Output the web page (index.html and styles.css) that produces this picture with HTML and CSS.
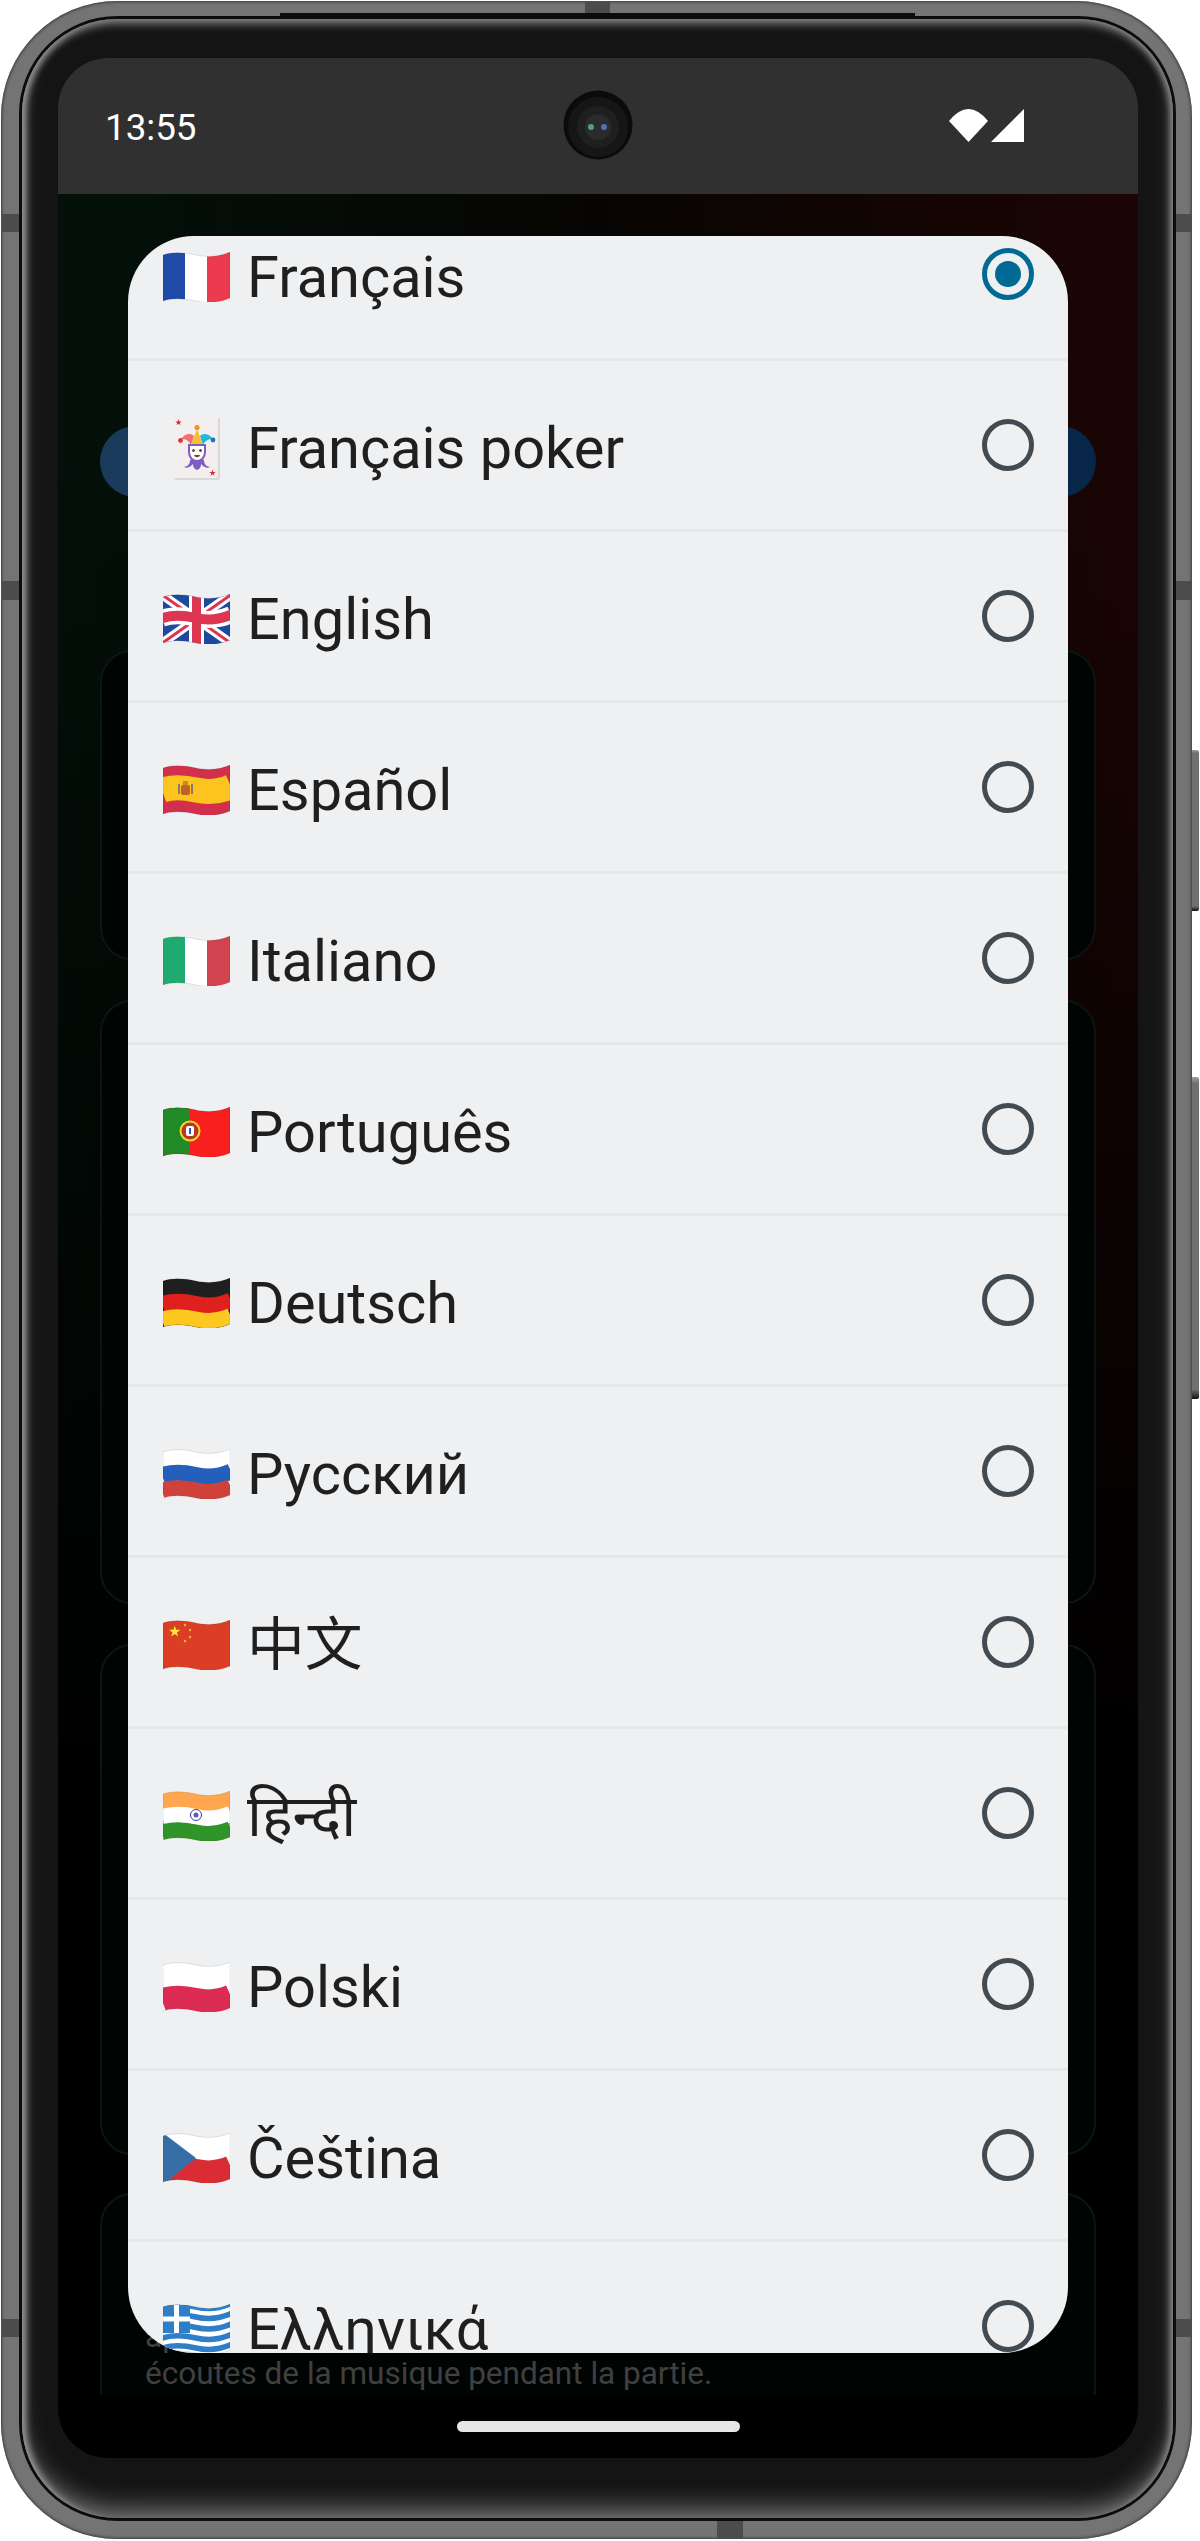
FILE: index.html
```html
<!DOCTYPE html>
<html lang="fr">
<head>
  <meta charset="UTF-8">
  <meta name="viewport" content="width=device-width, initial-scale=1.0">
  <title>Langue</title>
  <link rel="stylesheet" href="styles.css">
</head>
<body>
  <svg class="svg-defs" aria-hidden="true">
    <defs>
      <clipPath id="flag-clip"><path d="M0 3C8 0 20 0 33 3S58 4 67 0V46C58 50 46 52 33 49C20 46 8 46 0 49Z"/></clipPath>
      <path id="flag-shape" d="M0 3C8 0 20 0 33 3S58 4 67 0V46C58 50 46 52 33 49C20 46 8 46 0 49Z"/>
      <path id="wave" fill="none" d="M-1 3.2C8 0 20 0 33 3S58 4 68 -.4"/>
      <polygon id="star" points="0,-1 .225,-.31 .95,-.31 .36,.12 .59,.81 0,.38 -.59,.81 -.36,.12 -.95,-.31 -.225,-.31"/>
    </defs>
  </svg>

  <div class="phone">
    <span class="antenna ant-top"></span>
    <span class="antenna ant-bottom"></span>
    <span class="antenna ant-left ant-a"></span>
    <span class="antenna ant-left ant-b"></span>
    <span class="antenna ant-left ant-c"></span>
    <span class="antenna ant-right ant-a"></span>
    <span class="antenna ant-right ant-b"></span>
    <span class="antenna ant-right ant-c"></span>
    <span class="side-btn btn-power"></span>
    <span class="side-btn btn-volume"></span>

    <div class="phone-line">
      <div class="bezel">
        <div class="screen">
          <div class="status-bar">
            <span class="clock">13:55</span>
            <svg class="camera" viewBox="0 0 70 70">
              <circle cx="35" cy="35" r="34.5" fill="#0b0b0b"/>
              <circle cx="35" cy="37" r="30" fill="#161616"/>
              <circle cx="35" cy="37" r="21" fill="#1f1f1f"/>
              <circle cx="35" cy="37" r="13" fill="#292b2c"/>
              <circle cx="28" cy="37" r="3" fill="#5fb9b0" opacity="0.8"/>
              <circle cx="41" cy="37" r="3" fill="#5a86d8" opacity="0.8"/>
            </svg>
            <svg class="status-icons" viewBox="0 0 75 33">
              <path fill="#fff" d="M0 12Q19.500 -12 39 12L19.500 33Z"/>
              <path fill="#fff" d="M75 0V33H42Z"/>
            </svg>
          </div>

          <div class="app-content">
            <div class="pill"></div>
            <div class="card card-a"></div>
            <div class="card card-b"></div>
            <div class="card card-c"></div>
            <div class="card card-d">
              <p class="card-text">ap<br>écoutes de la musique pendant la partie.</p>
            </div>
          </div>

          <div class="nav-bar"><span class="home-indicator"></span></div>

          <div class="dialog">
            <ul class="lang-list">
              <li class="lang-row">
                <svg class="flag" viewBox="0 0 67 50"><g clip-path="url(#flag-clip)">
                  <rect width="67" height="52" fill="#fff"/>
                  <rect width="22" height="52" fill="#1f4aa8"/>
                  <rect x="44" width="23" height="52" fill="#ec3b4e"/>
                </g><use href="#flag-shape" class="flag-edge"/></svg>
                <span class="lang-name">Français</span>
                <span class="radio radio-on"></span>
              </li>
              <li class="lang-row">
                <svg class="flag" viewBox="0 0 67 50"></svg>
                <span class="lang-name">Français poker</span>
                <span class="radio"></span>
                <svg class="joker" viewBox="0 0 47 63">
                  <rect x="1" y="1" width="46" height="62" rx="2" fill="#dcd8d6"/>
                  <rect width="45" height="61" rx="2" fill="#f2efee"/>
                  <use href="#star" transform="translate(5.500 5.500) scale(3.400)" fill="#d9263c"/>
                  <use href="#star" transform="translate(39.500 56) scale(3.400)" fill="#d9263c"/>
                  <path fill="#7e5cc4" d="M11 50C16 49 17 46 17 43H31C31 46 32 49 37 50C33 52 30 49 28 47C28 50 27 52 24 53C21 52 20 50 20 47C18 49 15 52 11 50Z"/>
                  <path fill="#f2716f" d="M8 23C10 17 18 15 21 19L18 28C16 24 12 21 8 23Z"/>
                  <path fill="#22b6e2" d="M40 23C38 17 30 15 27 19L30 28C32 24 36 21 40 23Z"/>
                  <path fill="#fbbc2b" d="M24 12L30 28H18Z"/>
                  <circle cx="24" cy="10.500" r="2.600" fill="#f59322"/>
                  <circle cx="7.500" cy="23.500" r="2.400" fill="#d9363e"/>
                  <circle cx="40" cy="23" r="2.400" fill="#1a78b4"/>
                  <path fill="#fff" stroke="#7e5cc4" stroke-width="2" d="M16 28H32V35C32 41 28 44 24 44S16 41 16 35Z"/>
                  <path stroke="#6b4a3a" stroke-width="1.300" d="M19 33.500H22M20.500 32V35M26 33.500H29M27.500 32V35"/>
                  <path fill="#6b4a3a" d="M21 38H27C26.500 41 21.500 41 21 38Z"/>
                </svg>
              </li>
              <li class="lang-row">
                <svg class="flag" viewBox="0 0 67 50"><g clip-path="url(#flag-clip)">
                  <rect width="67" height="52" fill="#1e4a9e"/>
                  <path stroke="#fff" stroke-width="9" d="M-2 0L69 50M-2 50L69 0"/>
                  <path stroke="#dc3650" stroke-width="3" d="M-2 0L69 50M-2 50L69 0"/>
                  <use href="#wave" y="21" stroke="#fff" stroke-width="17"/>
                  <rect x="26" width="15" height="52" fill="#fff"/>
                  <use href="#wave" y="21" stroke="#dc3650" stroke-width="10"/>
                  <rect x="29" width="9" height="52" fill="#dc3650"/>
                </g><use href="#flag-shape" class="flag-edge"/></svg>
                <span class="lang-name">English</span>
                <span class="radio"></span>
              </li>
              <li class="lang-row">
                <svg class="flag" viewBox="0 0 67 50"><g clip-path="url(#flag-clip)">
                  <rect width="67" height="52" fill="#d12f4c"/>
                  <use href="#wave" y="22" stroke="#fdc41f" stroke-width="25"/>
                  <rect x="18" y="20" width="9" height="10" rx="2" fill="#c2602c"/>
                  <rect x="20" y="16" width="5" height="4" fill="#c9873a"/>
                  <rect x="15" y="19" width="2" height="10" fill="#8a7a6a"/>
                  <rect x="28" y="19" width="2" height="10" fill="#8a7a6a"/>
                </g><use href="#flag-shape" class="flag-edge"/></svg>
                <span class="lang-name">Español</span>
                <span class="radio"></span>
              </li>
              <li class="lang-row">
                <svg class="flag" viewBox="0 0 67 50"><g clip-path="url(#flag-clip)">
                  <rect width="67" height="52" fill="#fff"/>
                  <rect width="22" height="52" fill="#1fab6f"/>
                  <rect x="44" width="23" height="52" fill="#d0434f"/>
                </g><use href="#flag-shape" class="flag-edge"/></svg>
                <span class="lang-name">Italiano</span>
                <span class="radio"></span>
              </li>
              <li class="lang-row">
                <svg class="flag" viewBox="0 0 67 50"><g clip-path="url(#flag-clip)">
                  <rect width="67" height="52" fill="#f91f1f"/>
                  <rect width="27" height="52" fill="#1f8a26"/>
                  <circle cx="27" cy="24" r="9.500" fill="#b9382a" stroke="#e7dd28" stroke-width="2"/>
                  <rect x="23" y="19" width="8" height="10" rx="2" fill="#fff"/>
                  <rect x="26" y="21" width="2" height="6" fill="#2a55b8"/>
                </g><use href="#flag-shape" class="flag-edge"/></svg>
                <span class="lang-name">Português</span>
                <span class="radio"></span>
              </li>
              <li class="lang-row">
                <svg class="flag" viewBox="0 0 67 50"><g clip-path="url(#flag-clip)">
                  <rect width="67" height="52" fill="#1f1f1f"/>
                  <use href="#wave" y="23" stroke="#e01f1f" stroke-width="16"/>
                  <use href="#wave" y="39" stroke="#fdc81f" stroke-width="17"/>
                </g><use href="#flag-shape" class="flag-edge"/></svg>
                <span class="lang-name">Deutsch</span>
                <span class="radio"></span>
              </li>
              <li class="lang-row">
                <svg class="flag" viewBox="0 0 67 50"><g clip-path="url(#flag-clip)">
                  <rect width="67" height="52" fill="#fff"/>
                  <use href="#wave" y="23" stroke="#2460bb" stroke-width="16"/>
                  <use href="#wave" y="39" stroke="#cf423a" stroke-width="17"/>
                </g><use href="#flag-shape" class="flag-edge"/></svg>
                <span class="lang-name">Русский</span>
                <span class="radio"></span>
              </li>
              <li class="lang-row">
                <svg class="flag" viewBox="0 0 67 50"><g clip-path="url(#flag-clip)">
                  <rect width="67" height="52" fill="#dc3d25"/>
                  <use href="#star" transform="translate(11.700 11.700) scale(6)" fill="#ffe93b"/>
                  <use href="#star" transform="translate(22 5) scale(1.700)" fill="#ffe93b"/>
                  <use href="#star" transform="translate(27 10) scale(1.700)" fill="#ffe93b"/>
                  <use href="#star" transform="translate(27 17) scale(1.700)" fill="#ffe93b"/>
                  <use href="#star" transform="translate(22 21) scale(1.700)" fill="#ffe93b"/>
                </g><use href="#flag-shape" class="flag-edge"/></svg>
                <span class="lang-name">中文</span>
                <span class="radio"></span>
              </li>
              <li class="lang-row">
                <svg class="flag" viewBox="0 0 67 50"><g clip-path="url(#flag-clip)">
                  <rect width="67" height="52" fill="#ffa64e"/>
                  <use href="#wave" y="23" stroke="#fff" stroke-width="16"/>
                  <use href="#wave" y="39" stroke="#2f952a" stroke-width="17"/>
                  <circle cx="33" cy="24" r="5.500" fill="#fff" stroke="#3a3ab0" stroke-width="1"/>
                  <circle cx="33" cy="24" r="2.500" fill="#5a5ac8"/>
                </g><use href="#flag-shape" class="flag-edge"/></svg>
                <span class="lang-name">हिन्दी</span>
                <span class="radio"></span>
              </li>
              <li class="lang-row">
                <svg class="flag" viewBox="0 0 67 50"><g clip-path="url(#flag-clip)">
                  <rect width="67" height="52" fill="#fff"/>
                  <use href="#wave" y="35" stroke="#dc2c54" stroke-width="24"/>
                </g><use href="#flag-shape" class="flag-edge"/></svg>
                <span class="lang-name">Polski</span>
                <span class="radio"></span>
              </li>
              <li class="lang-row">
                <svg class="flag" viewBox="0 0 67 50"><g clip-path="url(#flag-clip)">
                  <rect width="67" height="52" fill="#fff"/>
                  <use href="#wave" y="35" stroke="#d92c34" stroke-width="24"/>
                  <path fill="#386ea6" d="M0 0L33 25L0 52Z"/>
                </g><use href="#flag-shape" class="flag-edge"/></svg>
                <span class="lang-name">Čeština</span>
                <span class="radio"></span>
              </li>
              <li class="lang-row">
                <svg class="flag" viewBox="0 0 67 50"><g clip-path="url(#flag-clip)">
                  <rect width="67" height="52" fill="#fff"/>
                  <use href="#wave" y="0" stroke="#2f7fc8" stroke-width="5.500"/>
                  <use href="#wave" y="10" stroke="#2f7fc8" stroke-width="5.500"/>
                  <use href="#wave" y="20.500" stroke="#2f7fc8" stroke-width="5.500"/>
                  <use href="#wave" y="31" stroke="#2f7fc8" stroke-width="5.500"/>
                  <use href="#wave" y="41" stroke="#2f7fc8" stroke-width="5.500"/>
                  <rect width="27" height="29" fill="#2f7fc8"/>
                  <rect x="11" width="5" height="29" fill="#fff"/>
                  <rect y="12.500" width="27" height="5" fill="#fff"/>
                </g><use href="#flag-shape" class="flag-edge"/></svg>
                <span class="lang-name">Ελληνικά</span>
                <span class="radio"></span>
              </li>
            </ul>
          </div>
        </div>
      </div>
    </div>
  </div>
</body>
</html>
```
FILE: styles.css
```css
body {
  margin: 0;
  background-color: #fff;
  font-family: Roboto, "Noto Sans", "Noto Sans CJK SC", sans-serif;
}
.svg-defs {
  position: absolute;
  width: 0;
  height: 0;
}

/* device frame */
.phone {
  position: relative;
  box-sizing: border-box;
  width: 1191px;
  height: 2538px;
  margin: 1px 0 0 1px;
  padding: 15px 16px 18px 18px;
  border-radius: 116px;
  background-color: #747474;
  box-shadow: inset 0 0 3px 1px #3c3c3c;
}
.phone-line {
  position: relative;
  height: 100%;
  box-sizing: border-box;
  border: 3px solid #0c0c0c;
  border-radius: 98px;
}
.phone-line::before {
  content: "";
  position: absolute;
  top: -6px;
  left: 258px;
  right: 258px;
  height: 5px;
  background-color: #0c0c0c;
}
.bezel {
  box-sizing: border-box;
  height: 100%;
  padding: 39px 32px 0 36px;
  border-radius: 95px;
  background-color: #141414;
  box-shadow:
    inset 0 8px 10px -4px #8e8e8e,
    inset 9px 0 7px -5px #9a9a9a,
    inset -9px 0 7px -6px #8a8a8a,
    inset 0 -16px 28px -10px #8c8c8c;
}
.screen {
  position: relative;
  display: flex;
  flex-direction: column;
  width: 1080px;
  height: 2400px;
  border-radius: 50px;
  background-color: #000;
  overflow: hidden;
}
.antenna {
  position: absolute;
  background-color: #4c4c4c;
}
.ant-top {
  top: 0;
  left: 584px;
  width: 25px;
  height: 15px;
}
.ant-bottom {
  bottom: 0;
  left: 716px;
  width: 26px;
  height: 18px;
}
.ant-left {
  left: 0;
  width: 18px;
}
.ant-right {
  right: 0;
  width: 16px;
}
.ant-a {
  top: 213px;
  height: 18px;
}
.ant-b {
  top: 580px;
  height: 19px;
}
.ant-c {
  top: 2318px;
  height: 18px;
}
.side-btn {
  position: absolute;
  right: -7px;
  width: 7px;
  border-radius: 0 2px 2px 0;
  background: linear-gradient(to bottom, #a0a0a0, #707070 2%, #707070 97%, #111);
}
.btn-power {
  top: 749px;
  height: 161px;
}
.btn-volume {
  top: 1076px;
  height: 322px;
}

/* status bar */
.status-bar {
  display: grid;
  grid-template-columns: 1fr auto 1fr;
  align-items: center;
  flex: none;
  box-sizing: border-box;
  height: 136px;
  padding-bottom: 2px;
  background-color: #303030;
  color: #fff;
}
.clock {
  padding: 5px 0 0 47px;
  font-size: 36.750px;
}
.camera {
  width: 70px;
  height: 70px;
}
.status-icons {
  justify-self: end;
  width: 75px;
  height: 33px;
  margin-right: 114px;
}

/* app behind the dialog */
.app-content {
  flex: none;
  box-sizing: border-box;
  height: 2201px;
  padding: 232px 42px 0;
  background:
    linear-gradient(to bottom, rgba(0,0,0,0) 10%, #000 72%),
    linear-gradient(to right, #03110a, #070503 50%, #1c0504);
  overflow: hidden;
}
.pill {
  height: 71px;
  border-radius: 36px;
  background: linear-gradient(to right, #1a3b5c, #082648);
}
.card {
  box-sizing: border-box;
  border: 2px solid #0d1514;
  border-radius: 32px;
  background-color: #000503;
}
.card-a {
  height: 310px;
  margin-top: 153px;
}
.card-b {
  height: 604px;
  margin-top: 40px;
}
.card-c {
  height: 511px;
  margin-top: 40px;
}
.card-d {
  height: 300px;
  margin-top: 38px;
  padding: 123px 43px 0;
}
.card-text {
  margin: 0;
  font-size: 31.500px;
  line-height: 37px;
  color: #404040;
}
.nav-bar {
  display: flex;
  justify-content: center;
  flex: none;
  height: 63px;
  padding-top: 26px;
  box-sizing: border-box;
}
.home-indicator {
  width: 283px;
  height: 11px;
  border-radius: 6px;
  background-color: #e6e6e6;
}

/* language dialog */
.dialog {
  position: absolute;
  top: 178px;
  left: 70px;
  width: 940px;
  height: 2117px;
  border-radius: 66px;
  background-color: #eff0f2;
  overflow: hidden;
}
.lang-list {
  margin: -46px 0 0;
  padding: 0;
  list-style: none;
}
.lang-row {
  position: relative;
  display: flex;
  align-items: center;
  box-sizing: border-box;
  height: 171px;
  padding: 0 34px 1px 35px;
  border-bottom: 3px solid #e6e7e9;
}
.flag {
  flex: none;
  width: 67px;
  height: 50px;
  margin: 7px 17px 0 0;
}
.flag-edge {
  fill: none;
  stroke: rgba(0,0,0,0.1);
  stroke-width: 1;
}
.joker {
  position: absolute;
  top: 56px;
  left: 45px;
  width: 47px;
  height: 63px;
}
.lang-name {
  flex: 1;
  padding-top: 6px;
  font-size: 57.750px;
  line-height: 68px;
  color: #1f1f1f;
}
.radio {
  position: relative;
  flex: none;
  box-sizing: border-box;
  width: 52px;
  height: 52px;
  border: 5px solid #424a52;
  border-radius: 50%;
}
.radio-on {
  border-color: #006a94;
}
.radio-on::after {
  content: "";
  position: absolute;
  top: 8px;
  left: 8px;
  width: 26px;
  height: 26px;
  border-radius: 50%;
  background-color: #006a94;
}
```
